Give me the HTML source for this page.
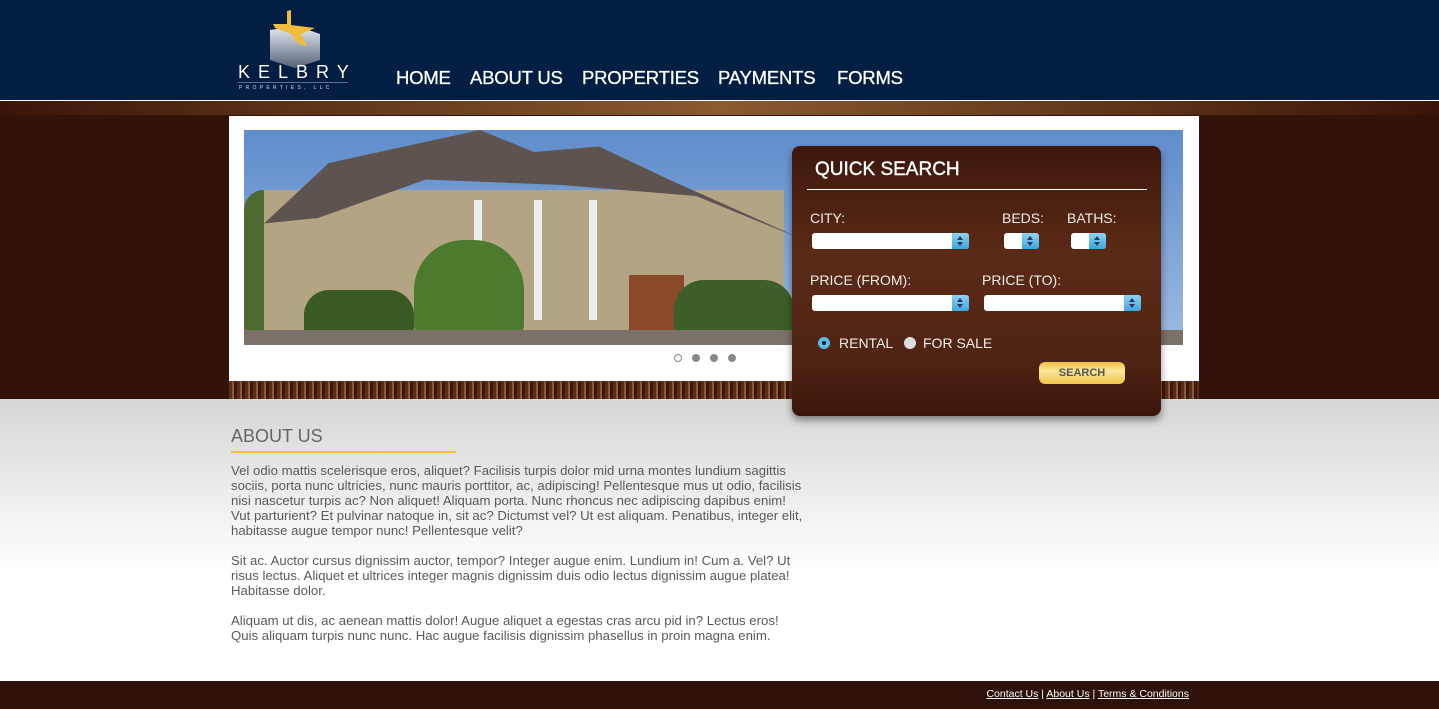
<!DOCTYPE html>
<html><head><meta charset="utf-8"><style>
*{margin:0;padding:0;box-sizing:border-box}
body{width:1439px;height:709px;overflow:hidden;position:relative;font-family:"Liberation Sans",sans-serif;background:linear-gradient(#d6d6d6 399px,#fff 570px)}
.a{position:absolute}
#hdr{left:0;top:0;width:1439px;height:100px;background:#021e42}
#line{left:0;top:100px;width:1439px;height:1px;background:#fff}
#band{left:0;top:101px;width:1439px;height:298px;background:#33120a}
#band2{left:0;top:101px;width:1439px;height:14px;background:linear-gradient(90deg,#3a1509,#6a4020 30%,#8a5a30 50%,#6a4020 70%,#3a1509)}
#band3{left:229px;top:381px;width:970px;height:18px;background:repeating-linear-gradient(90deg,#5a2e14 0 3px,#8a5a30 3px 5px,#3a1a0a 5px 8px)}
.nav{top:67px;color:#fff;font-size:18.5px;letter-spacing:-0.2px;-webkit-text-stroke:0.3px #fff}
#frame{left:229px;top:116px;width:970px;height:265px;background:#fff}
#photo{left:244px;top:130px;width:939px;height:215px;background:linear-gradient(#5f8ccc,#9dbbe0);overflow:hidden}
.dot{top:354px;width:8px;height:8px;border-radius:50%;background:#888}
#qs{left:792px;top:146px;width:369px;height:270px;border-radius:8px;background:linear-gradient(#3d170b,#5a2a16 40%,#4f2413 80%,#3a160a);box-shadow:0 4px 8px rgba(0,0,0,.45)}
.lbl{color:#f2ece8;font-size:14px}
.sel{height:16px;border-radius:3px;background:#fff}
.sel i{position:absolute;right:0;top:0;width:17px;height:16px;border-radius:0 3px 3px 0;background:linear-gradient(#8fd3f4,#3aa6df)}
.sel i:before{content:"";position:absolute;left:5px;top:3px;border:3.5px solid transparent;border-top:none;border-bottom:4px solid #335}
.sel i:after{content:"";position:absolute;left:5px;top:9px;border:3.5px solid transparent;border-bottom:none;border-top:4px solid #335}
p{font-size:13.2px;line-height:15px;color:#5a5a5a;margin-bottom:15px;white-space:nowrap}
#ft{left:0;top:681px;width:1439px;height:28px;background:#2d110a}
#ft div{position:absolute;right:250px;top:7px;color:#fff;font-size:10.5px}
#ft u{color:#fff}
</style></head><body>
<div class="a" id="hdr"></div>
<div class="a" id="line"></div>
<div class="a" id="band"></div>
<div class="a" id="band2"></div>
<div class="a" id="band3"></div>
<svg class="a" style="left:265px;top:8px" width="60" height="60" viewBox="0 0 60 60">
<defs><linearGradient id="g" x1="0" y1="0" x2="0" y2="1"><stop offset="0" stop-color="#e8ecf2"/><stop offset="1" stop-color="#56627a"/></linearGradient></defs>
<path d="M5 22 L32 18 L55 26 L55 52 L30 60 L5 52Z" fill="url(#g)"/>
<path d="M22 3 L26 2 L26 17 L50 20 L36 26 L42 38 L34 36 L26 26 L10 20 L8 16 L22 16Z" fill="#f4bc3c"/>
</svg>
<div class="a" style="left:238px;top:62px;color:#fff;font-size:18px;letter-spacing:8px">KELBRY</div>
<div class="a" style="left:238px;top:82px;width:110px;height:1px;background:#5a6f90"></div>
<div class="a" style="left:239px;top:85px;color:#dde;font-size:5px;letter-spacing:3.3px">PROPERTIES, LLC</div>
<div class="a nav" style="left:396px">HOME</div>
<div class="a nav" style="left:470px">ABOUT US</div>
<div class="a nav" style="left:582px">PROPERTIES</div>
<div class="a nav" style="left:718px">PAYMENTS</div>
<div class="a nav" style="left:837px">FORMS</div>
<div class="a" id="frame"></div>
<div class="a" id="photo">
 <div class="a" style="left:0;top:60px;width:40px;height:140px;background:#4f6a30;border-radius:20px 20px 0 0"></div>
 <div class="a" style="left:20px;top:60px;width:520px;height:140px;background:#b3a483"></div>
 <div class="a" style="left:20px;top:0;width:540px;height:110px;background:#5e544f;clip-path:polygon(0 85%,12% 30%,40% 0,50% 20%,62% 15%,75% 45%,100% 100%,80% 60%,55% 50%,30% 45%,10% 80%)"></div>
 <div class="a" style="left:230px;top:70px;width:8px;height:120px;background:#eee"></div>
 <div class="a" style="left:290px;top:70px;width:8px;height:120px;background:#eee"></div>
 <div class="a" style="left:345px;top:70px;width:8px;height:120px;background:#eee"></div>
 <div class="a" style="left:385px;top:145px;width:55px;height:55px;background:#8a4a2a"></div>
 <div class="a" style="left:170px;top:110px;width:110px;height:95px;background:#4e7a2e;border-radius:50px 50px 10px 10px"></div>
 <div class="a" style="left:430px;top:150px;width:120px;height:55px;background:#3d5e28;border-radius:30px 30px 0 0"></div>
 <div class="a" style="left:60px;top:160px;width:110px;height:45px;background:#3a5a24;border-radius:25px 25px 0 0"></div>
 <div class="a" style="left:0;top:200px;width:939px;height:15px;background:#7a7266"></div>
</div>
<div class="a dot" style="left:674px;background:#fff;border:1px solid #888"></div>
<div class="a dot" style="left:692px"></div>
<div class="a dot" style="left:710px"></div>
<div class="a dot" style="left:728px"></div>
<div class="a" id="qs">
 <div class="a" style="left:23px;top:13px;color:#fff;font-size:19px;-webkit-text-stroke:0.4px #fff">QUICK SEARCH</div>
 <div class="a" style="left:15px;top:43px;width:340px;height:1px;background:#fff"></div>
 <div class="a lbl" style="left:18px;top:64px">CITY:</div>
 <div class="a lbl" style="left:210px;top:64px">BEDS:</div>
 <div class="a lbl" style="left:275px;top:64px">BATHS:</div>
 <div class="a sel" style="left:20px;top:87px;width:157px"><i></i></div>
 <div class="a sel" style="left:212px;top:87px;width:35px"><i></i></div>
 <div class="a sel" style="left:279px;top:87px;width:35px"><i></i></div>
 <div class="a lbl" style="left:18px;top:126px">PRICE (FROM):</div>
 <div class="a lbl" style="left:190px;top:126px">PRICE (TO):</div>
 <div class="a sel" style="left:20px;top:149px;width:157px"><i></i></div>
 <div class="a sel" style="left:192px;top:149px;width:157px"><i></i></div>
 <div class="a" style="left:26px;top:191px;width:12px;height:12px;border-radius:50%;background:#5bbbe9"><div class="a" style="left:4px;top:4px;width:4px;height:4px;border-radius:50%;background:#123"></div></div>
 <div class="a lbl" style="left:47px;top:189px">RENTAL</div>
 <div class="a" style="left:112px;top:191px;width:12px;height:12px;border-radius:50%;background:#ddd"></div>
 <div class="a lbl" style="left:131px;top:189px">FOR SALE</div>
 <div class="a" style="left:247px;top:216px;width:86px;height:22px;border-radius:6px;background:linear-gradient(#f0c040,#fbe69a 40%,#f2c44a);color:#555;font-size:11px;font-weight:bold;text-align:center;line-height:22px">SEARCH</div>
</div>
<div class="a" style="left:231px;top:426px;color:#666;font-size:18px">ABOUT US</div>
<div class="a" style="left:231px;top:451px;width:225px;height:2px;background:#f7c03a"></div>
<div class="a" style="left:231px;top:463px;width:590px">
<p>Vel odio mattis scelerisque eros, aliquet? Facilisis turpis dolor mid urna montes lundium sagittis<br>sociis, porta nunc ultricies, nunc mauris porttitor, ac, adipiscing! Pellentesque mus ut odio, facilisis<br>nisi nascetur turpis ac? Non aliquet! Aliquam porta. Nunc rhoncus nec adipiscing dapibus enim!<br>Vut parturient? Et pulvinar natoque in, sit ac? Dictumst vel? Ut est aliquam. Penatibus, integer elit,<br>habitasse augue tempor nunc! Pellentesque velit?</p>
<p>Sit ac. Auctor cursus dignissim auctor, tempor? Integer augue enim. Lundium in! Cum a. Vel? Ut<br>risus lectus. Aliquet et ultrices integer magnis dignissim duis odio lectus dignissim augue platea!<br>Habitasse dolor.</p>
<p>Aliquam ut dis, ac aenean mattis dolor! Augue aliquet a egestas cras arcu pid in? Lectus eros!<br>Quis aliquam turpis nunc nunc. Hac augue facilisis dignissim phasellus in proin magna enim.</p>
</div>
<div class="a" id="ft"><div><u>Contact Us</u> | <u>About Us</u> | <u>Terms &amp; Conditions</u></div></div>
</body></html>
